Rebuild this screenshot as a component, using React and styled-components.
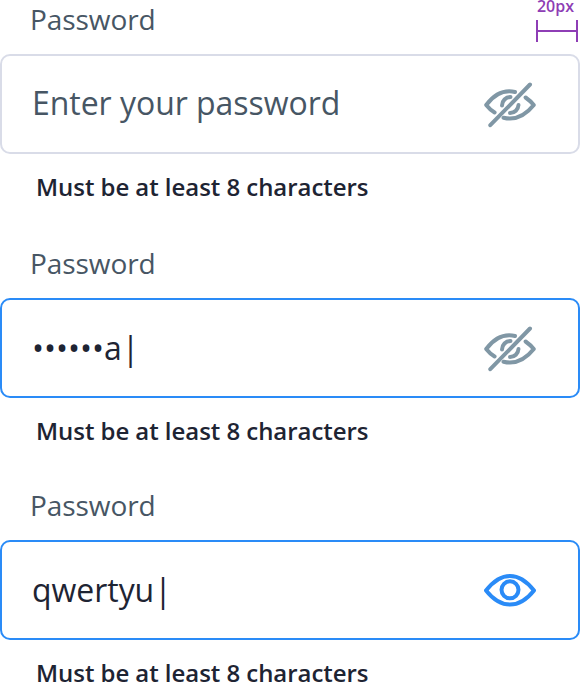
import React from "react";
import styled, { createGlobalStyle } from "styled-components";

const GlobalStyle = createGlobalStyle`
  * { box-sizing: border-box; }
  body {
    margin: 0;
    background: #fff;
    font-family: "Open Sans", "Noto Sans", sans-serif;
    overflow: hidden;
  }
`;

const Page = styled.main`
  width: 580px;
  height: 684px;
  overflow: hidden;
  display: flex;
  flex-direction: column;
`;

const Field = styled.section`
  height: ${(p) => p.$height}px;
  flex: none;
`;

const Header = styled.div`
  height: 54px;
  display: flex;
  justify-content: space-between;
  padding: 0 2px 0 30px;
`;

const Label = styled.label`
  font-size: 28px;
  line-height: 38px;
  letter-spacing: -0.08px;
  color: #475664;
`;

const Spacing = styled.div`
  width: 42px;
  display: flex;
  flex-direction: column;
  align-items: center;
  color: #8e3db5;
  font-size: 16px;
  font-weight: 600;
  line-height: 12px;
`;

const SpacingValue = styled.span`
  padding-right: 3px;
`;

const Measure = styled.div`
  width: 42px;
  height: 22px;
  margin-top: 8px;
  border: solid currentColor;
  border-width: 0 2px;
  display: flex;
  align-items: center;

  &::before {
    content: "";
    flex: 1;
    height: 2px;
    background: currentColor;
  }
`;

const InputBox = styled.div`
  height: 100px;
  border: 2px solid ${(p) => (p.$active ? "#2a8bf7" : "#d9dce8")};
  border-radius: 10px;
  display: flex;
  align-items: center;
  justify-content: space-between;
  padding: 0 40px 0 30px;
`;

const Value = styled.span`
  font-size: 32px;
  line-height: 44px;
  letter-spacing: -0.04px;
  padding-bottom: ${(p) => (p.$placeholder ? 3 : 0)}px;
  color: ${(p) => (p.$placeholder ? "#475664" : "#1e2433")};
`;

const Toggle = styled.svg`
  width: 56px;
  height: 52px;
  fill: none;
  stroke: ${(p) => (p.$on ? "#2a8bf7" : "#8097a5")};
  stroke-width: 4;
  stroke-linecap: round;
  stroke-linejoin: round;
`;

const Helper = styled.p`
  margin: 13px 0 0 36px;
  font-size: 24px;
  font-weight: 600;
  line-height: 40px;
  letter-spacing: -0.05px;
  color: #1e2433;
`;

const HiddenIcon = () => (
  <Toggle viewBox="0 0 56 52">
    <path d="M48 6.5 8.3 47.2" />
    <path d="M33 14C22 11.5 12.5 16 4.2 27Q8 31.8 12.6 34.5" />
    <path d="M43.6 19.5Q48.5 23 51.8 27C43 38 33 42.5 21.5 39.7" />
    <path d="M20 27.5A8.5 8.5 0 0 1 28.5 19" />
    <path d="M36.5 27A8.5 8.5 0 0 1 28 35" />
  </Toggle>
);

const VisibleIcon = () => (
  <Toggle viewBox="0 0 56 52" $on>
    <path d="M4 26.5C19 7 37 7 52 26.5C37 45.3 19 45.3 4 26.5Z" />
    <circle cx="28" cy="25.8" r="8.5" />
  </Toggle>
);

function PasswordField({ height, text, placeholder, visible, spacing }) {
  return (
    <Field $height={height}>
      <Header>
        <Label>Password</Label>
        {spacing && (
          <Spacing>
            <SpacingValue>{spacing}</SpacingValue>
            <Measure />
          </Spacing>
        )}
      </Header>
      <InputBox $active={!placeholder}>
        <Value $placeholder={placeholder}>{text}</Value>
        {visible ? <VisibleIcon /> : <HiddenIcon />}
      </InputBox>
      <Helper>Must be at least 8 characters</Helper>
    </Field>
  );
}

export default function App() {
  return (
    <>
      <GlobalStyle />
      <Page>
        <PasswordField height={244} text="Enter your password" placeholder spacing="20px" />
        <PasswordField height={242} text="••••••a|" />
        <PasswordField height={198} text="qwertyu|" visible />
      </Page>
    </>
  );
}
